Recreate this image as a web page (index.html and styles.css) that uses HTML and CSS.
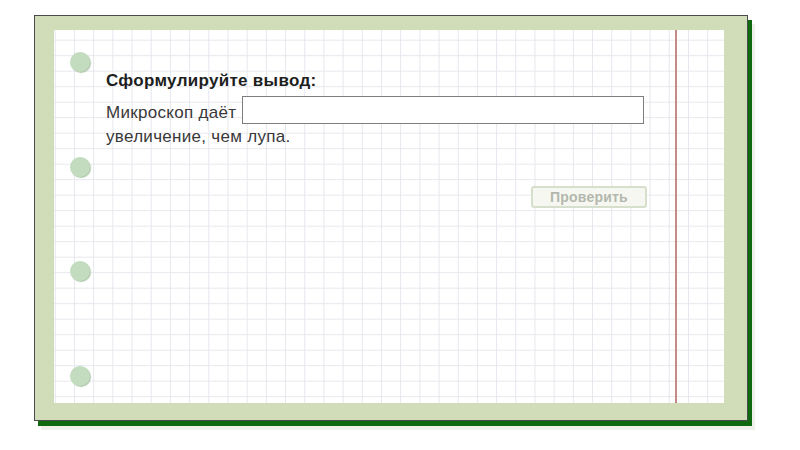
FILE: index.html
```html
<!DOCTYPE html>
<html lang="ru">
<head>
    <meta charset="UTF-8">
    <title>Сформулируйте вывод</title>
    <link rel="stylesheet" href="styles.css">
</head>
<body>
    <div class="sheet">
        <div class="paper">
            <div class="holes">
                <span class="hole"></span>
                <span class="hole"></span>
                <span class="hole"></span>
                <span class="hole"></span>
            </div>
            <div class="task">
                <h1 class="task-title">Сформулируйте вывод:</h1>
                <div class="answer-row">
                    <span class="answer-text">Микроскоп даёт</span>
                    <input type="text" class="answer-input">
                </div>
                <p class="answer-tail">увеличение, чем лупа.</p>
                <button class="check-btn" disabled>Проверить</button>
            </div>
        </div>
    </div>
</body>
</html>
```

FILE: styles.css
```css
html, body {
    min-height: 450px;
}
body {
    margin: 0;
    padding-top: 15px;
    box-sizing: border-box;
    background: #fff;
    font-family: "Liberation Sans", Arial, sans-serif;
}
.sheet {
    box-sizing: border-box;
    width: 714px;
    height: 406px;
    margin-left: 34px;
    padding: 14px 23px 17px 19px;
    background: #d1ddb9;
    border: 1px solid #4a4a4a;
    box-shadow: 4px 5px 0 #0f6a0f, 7px 9px 0 #eef1ea;
}
.paper {
    display: flex;
    height: 100%;
    background-color: #fff;
    background-image:
        linear-gradient(to right, #e6e6ee 1px, transparent 1px),
        linear-gradient(to bottom, #e7e7ef 1px, transparent 1px);
    background-size: 19.2px 15.5px;
    background-position: 0.8px 9.7px;
}
.holes {
    flex: 0 0 52px;
    display: flex;
    flex-direction: column;
    gap: 84.5px;
    padding-top: 22px;
}
.hole {
    display: block;
    width: 20px;
    height: 20px;
    margin-left: 16px;
    border-radius: 50%;
    background: #c3dbbf;
    box-shadow: 1px 1px 1px #b0c7ab;
}
.task {
    flex: 0 0 569px;
    display: flex;
    flex-direction: column;
    border-right: 2px solid #c48a8a;
    padding-top: 41px;
}
.task-title {
    margin: 0;
    font-size: 17px;
    letter-spacing: 0.3px;
    line-height: 20px;
    font-weight: bold;
    color: #1e1e1e;
}
.answer-row {
    display: flex;
    align-items: flex-end;
    gap: 6px;
    margin-top: 5px;
}
.answer-text,
.answer-tail {
    font-size: 17px;
    letter-spacing: 0.3px;
    line-height: 20px;
    color: #383838;
}
.answer-text {
    margin-bottom: 1px;
}
.answer-input {
    box-sizing: border-box;
    flex: 0 0 402px;
    height: 28px;
    margin: 0;
    border: 1px solid #7d7d7d;
    background: #fff;
}
.answer-tail {
    margin: 3px 0 0;
}
.check-btn {
    align-self: flex-end;
    box-sizing: border-box;
    width: 116px;
    height: 22px;
    margin: 39px 28px 0 0;
    padding: 0;
    background: #f5f7f0;
    border: 2px solid #d6dfcb;
    border-radius: 3px;
    font-family: "Liberation Sans", Arial, sans-serif;
    font-size: 14px;
    letter-spacing: 0.2px;
    font-weight: bold;
    color: #b4b7ae;
}
```
